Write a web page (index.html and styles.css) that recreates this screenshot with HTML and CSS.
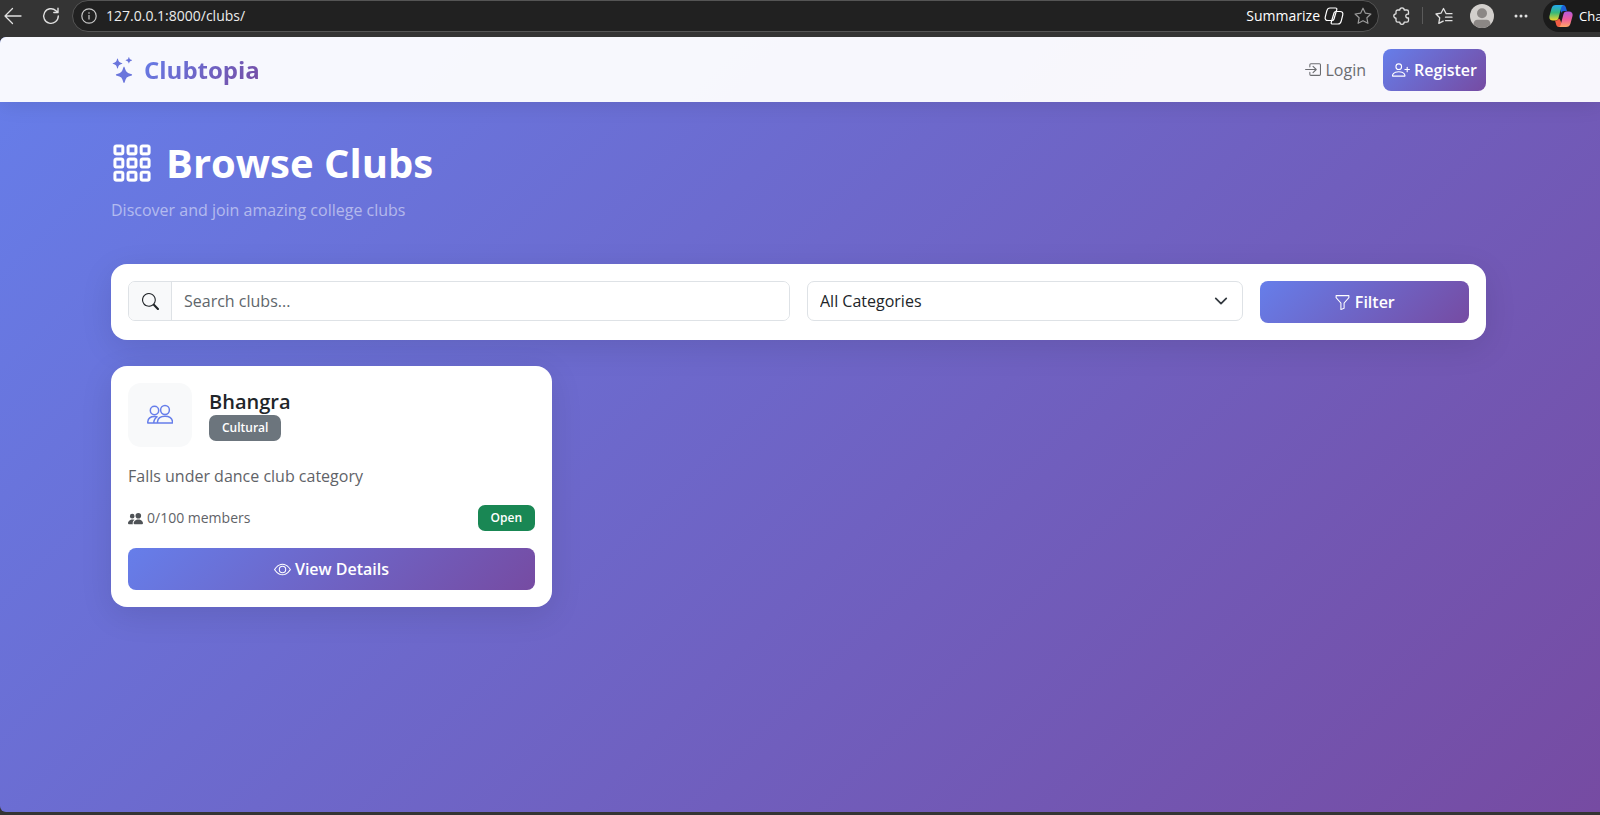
FILE: index.html
```html
<!DOCTYPE html>
<html lang="en">
<head>
    <meta charset="UTF-8">
    <meta name="viewport" content="width=device-width, initial-scale=1.0">
    <title>Browse Clubs - Clubtopia</title>
    <link rel="stylesheet" href="styles.css">
</head>
<body>
    <!-- Browser toolbar -->
    <div class="toolbar">
        <button class="tool back" aria-label="Back">
            <svg width="18" height="18" viewBox="0 0 18 18" fill="none" stroke="currentColor" stroke-width="1.3" stroke-linecap="round" stroke-linejoin="round"><path d="M17 9H1M8.500 1.500 1 9l7.500 7.500"/></svg>
        </button>
        <button class="tool reload" aria-label="Reload">
            <svg width="18" height="18" viewBox="0 0 18 18" fill="none" stroke="currentColor" stroke-width="1.400" stroke-linecap="round" stroke-linejoin="round"><path d="M16.300 9a7.300 7.300 0 1 1-2.300-5.300L16 5.500M16 1.300v4.200h-4.200"/></svg>
        </button>
        <div class="address">
            <svg width="16" height="16" viewBox="0 0 16 16" fill="none" stroke="#c8c8c8" stroke-width="1.200"><circle cx="8" cy="8" r="7.200"/><path d="M8 7v4.500M8 4.300v1.400"/></svg>
            <input class="address-input" type="text" aria-label="Address" value="127.0.0.1:8000/clubs/">
            <button class="summarize">Summarize
                <svg width="20" height="18" viewBox="0 0 20 18" fill="none" stroke="currentColor" stroke-width="1.200" stroke-linejoin="round"><path d="M6 1h5.500c1 0 1.500.5 1.300 1.500L10 12c-.3 1-.9 1.500-2 1.500H4c-2.300 0-3.300-1.400-2.700-3.600l1.500-6C3.300 1.900 4.300 1 6 1z"/><path d="M14 17H8.500c-1 0-1.500-.5-1.300-1.500L10 6c.3-1 .9-1.500 2-1.500h4c2.300 0 3.300 1.400 2.700 3.600l-1.500 6c-.5 2-1.500 2.900-3.200 2.900z"/></svg>
            </button>
            <button class="tool star" aria-label="Add to favorites">
                <svg width="18" height="18" viewBox="0 0 18 18" fill="none" stroke="currentColor" stroke-width="1.200" stroke-linejoin="round"><path d="m9 1.200 2.400 5 5.500.8-4 3.800 1 5.500L9 13.700l-4.900 2.600 1-5.500-4-3.800 5.500-.8z"/></svg>
            </button>
        </div>
        <button class="tool" aria-label="Extensions">
            <svg width="18" height="18" viewBox="0 0 18 18" fill="none" stroke="currentColor" stroke-width="1.300" stroke-linejoin="round"><path d="M4.700 3h2.100a2.200 2.200 0 0 1 4.400 0h2.600A1.700 1.700 0 0 1 15.500 4.700v2.500h-.8a1.900 1.900 0 0 0 0 3.800h.8v2.400a1.700 1.700 0 0 1-1.700 1.700h-2.600a2.200 2.200 0 0 1-4.400 0H4.700A1.700 1.700 0 0 1 3 13.400v-2.200a2.200 2.200 0 0 1 0-4.400V4.700A1.700 1.700 0 0 1 4.700 3z"/></svg>
        </button>
        <span class="divider"></span>
        <button class="tool" aria-label="Favorites">
            <svg width="18" height="18" viewBox="0 0 18 18" fill="none" stroke="currentColor" stroke-width="1.300" stroke-linejoin="round" stroke-linecap="round"><path d="M17 6.700h-5.800L8.500 1.500 6 6.200l-5 .8 3.700 3.800-.9 5.500 4.400-2.200M10.500 10.200H17M10.500 13.700H17"/></svg>
        </button>
        <button class="tool avatar" aria-label="Profile">
            <svg width="24" height="24" viewBox="0 0 24 24"><circle cx="12" cy="12" r="12" fill="#d2cfcc"/><circle cx="12" cy="9.300" r="5" fill="#8b8785"/><path d="M3.500 20.500c0-3 1.500-4.700 4-4.700h9c2.500 0 4 1.700 4 4.700a12 12 0 0 1-17 0z" fill="#8b8785"/></svg>
        </button>
        <button class="tool more" aria-label="Settings and more">
            <svg width="14" height="4" viewBox="0 0 14 4" fill="currentColor"><circle cx="2" cy="2" r="1.500"/><circle cx="7" cy="2" r="1.500"/><circle cx="12" cy="2" r="1.500"/></svg>
        </button>
        <button class="copilot">
            <svg width="24" height="24" viewBox="0 0 24 24">
                <defs>
                    <linearGradient id="cool" x1="0" y1="0" x2="0" y2="1"><stop offset="0" stop-color="#22a8f0"/><stop offset=".5" stop-color="#38b978"/><stop offset="1" stop-color="#f3d62b"/></linearGradient>
                    <linearGradient id="warm" x1="0" y1="0" x2="0" y2="1"><stop offset="0" stop-color="#b45ae0"/><stop offset=".5" stop-color="#ef5c9c"/><stop offset="1" stop-color="#ffa765"/></linearGradient>
                </defs>
                <path fill="#1b62d8" d="M10 1h4c1.500 0 2.300.7 2.700 2l1.300 4h-3c-1.500 0-2.300.8-2.700 2z"/>
                <path fill="url(#cool)" d="M7 1h8c-1.500 0-2.300 1-2.700 2.300L9.500 14c-.5 1.700-1.500 2.500-3 2.500H4c-3 0-4.200-2-3.400-5l1.900-7C3.200 2 4.500 1 7 1z"/>
                <path fill="#f25c43" d="M14 23h-4c-1.500 0-2.300-.7-2.700-2L6 16.500h1.500c1 0 1.800-.8 2.200-2l1.300 1z"/>
                <path fill="url(#warm)" d="M17 23H9c1.500 0 2.300-1 2.700-2.300L14.500 10c.5-1.700 1.500-2.500 3-2.500H20c3 0 4.200 2 3.400 5l-1.900 7c-.7 2.500-2 3.500-4.500 3.500z"/>
            </svg>
            Cha
        </button>
    </div>

    <div class="page">
        <nav class="navbar">
            <div class="container nav-inner">
                <a class="brand" href="#">
                    <svg class="brand-icon" width="26" height="26" viewBox="0 0 16 16" fill="#6a75dc"><path d="M7.657 6.247c.11-.33.576-.33.686 0l.645 1.937a2.890 2.890 0 0 0 1.829 1.828l1.936.645c.33.11.33.576 0 .686l-1.937.645a2.890 2.890 0 0 0-1.828 1.829l-.645 1.936a.361.361 0 0 1-.686 0l-.645-1.937a2.890 2.890 0 0 0-1.828-1.828l-1.937-.645a.361.361 0 0 1 0-.686l1.937-.645a2.890 2.890 0 0 0 1.828-1.828zM3.794 1.148a.217.217 0 0 1 .412 0l.387 1.162c.173.518.579.924 1.097 1.097l1.162.387a.217.217 0 0 1 0 .412l-1.162.387A1.730 1.730 0 0 0 4.593 5.690l-.387 1.162a.217.217 0 0 1-.412 0L3.407 5.690A1.730 1.730 0 0 0 2.310 4.593l-1.162-.387a.217.217 0 0 1 0-.412l1.162-.387A1.730 1.730 0 0 0 3.407 2.310zM10.863.099a.145.145 0 0 1 .274 0l.258.774c.115.346.386.617.732.732l.774.258a.145.145 0 0 1 0 .274l-.774.258a1.160 1.160 0 0 0-.732.732l-.258.774a.145.145 0 0 1-.274 0l-.258-.774a1.160 1.160 0 0 0-.732-.732L9.100 2.137a.145.145 0 0 1 0-.274l.774-.258c.346-.115.617-.386.732-.732z"/></svg>
                    <span class="brand-name">Clubtopia</span>
                </a>
                <div class="nav-links">
                    <a class="nav-link" href="#">
                        <svg width="17" height="17" viewBox="0 0 16 16" fill="currentColor"><path fill-rule="evenodd" d="M6 3.500a.5.5 0 0 1 .5-.5h8a.5.5 0 0 1 .5.5v9a.5.5 0 0 1-.5.5h-8a.5.5 0 0 1-.5-.5v-2a.5.5 0 0 0-1 0v2A1.500 1.500 0 0 0 6.500 14h8a1.500 1.500 0 0 0 1.500-1.500v-9A1.500 1.500 0 0 0 14.500 2h-8A1.500 1.500 0 0 0 5 3.500v2a.5.5 0 0 0 1 0z"/><path fill-rule="evenodd" d="M11.854 8.354a.5.5 0 0 0 0-.708l-3-3a.5.5 0 1 0-.708.708L10.293 7.500H1.500a.5.5 0 0 0 0 1h8.793l-2.147 2.146a.5.5 0 0 0 .708.708z"/></svg>
                        Login
                    </a>
                    <a class="btn" href="#">
                        <svg width="18" height="18" viewBox="0 0 16 16" fill="currentColor"><path d="M6 8a3 3 0 1 0 0-6 3 3 0 0 0 0 6m2-3a2 2 0 1 1-4 0 2 2 0 0 1 4 0m4 8c0 1-1 1-1 1H1s-1 0-1-1 1-4 6-4 6 3 6 4m-1-.004c-.001-.246-.154-.986-.832-1.664C9.516 10.680 8.289 10 6 10s-3.516.68-4.168 1.332c-.678.678-.83 1.418-.832 1.664z"/><path fill-rule="evenodd" d="M13.500 5a.5.5 0 0 1 .5.5V7h1.500a.5.5 0 0 1 0 1H14v1.500a.5.5 0 0 1-1 0V8h-1.500a.5.5 0 0 1 0-1H13V5.500a.5.5 0 0 1 .5-.5"/></svg>
                        Register
                    </a>
                </div>
            </div>
        </nav>

        <main class="container">
            <header class="page-header">
                <h1>
                    <svg width="42" height="42" viewBox="0 0 16 16" fill="currentColor" stroke="currentColor" stroke-width=".15"><path d="M4 2v2H2V2zm1 12v-2a1 1 0 0 0-1-1H2a1 1 0 0 0-1 1v2a1 1 0 0 0 1 1h2a1 1 0 0 0 1-1m0-5V7a1 1 0 0 0-1-1H2a1 1 0 0 0-1 1v2a1 1 0 0 0 1 1h2a1 1 0 0 0 1-1m0-5V2a1 1 0 0 0-1-1H2a1 1 0 0 0-1 1v2a1 1 0 0 0 1 1h2a1 1 0 0 0 1-1m5 10v-2a1 1 0 0 0-1-1H7a1 1 0 0 0-1 1v2a1 1 0 0 0 1 1h2a1 1 0 0 0 1-1m0-5V7a1 1 0 0 0-1-1H7a1 1 0 0 0-1 1v2a1 1 0 0 0 1 1h2a1 1 0 0 0 1-1m0-5V2a1 1 0 0 0-1-1H7a1 1 0 0 0-1 1v2a1 1 0 0 0 1 1h2a1 1 0 0 0 1-1M9 2v2H7V2zm5 0v2h-2V2zM4 7v2H2V7zm5 0v2H7V7zm5 0h-2v2h2zM4 12v2H2v-2zm5 0v2H7v-2zm5 0v2h-2v-2zM12 1a1 1 0 0 0-1 1v2a1 1 0 0 0 1 1h2a1 1 0 0 0 1-1V2a1 1 0 0 0-1-1zm-1 6a1 1 0 0 1 1-1h2a1 1 0 0 1 1 1v2a1 1 0 0 1-1 1h-2a1 1 0 0 1-1-1zm1 4a1 1 0 0 0-1 1v2a1 1 0 0 0 1 1h2a1 1 0 0 0 1-1v-2a1 1 0 0 0-1-1z"/></svg>
                    Browse Clubs
                </h1>
                <p class="subtitle">Discover and join amazing college clubs</p>
            </header>

            <form class="card filter-form">
                <div class="search-group">
                    <label class="search-icon" for="search" aria-label="Search">
                        <svg width="17" height="17" viewBox="0 0 16 16" fill="currentColor"><path d="M11.742 10.344a6.500 6.500 0 1 0-1.397 1.398h-.001q.044.06.098.115l3.850 3.850a1 1 0 0 0 1.415-1.414l-3.850-3.850a1 1 0 0 0-.115-.1zM12 6.500a5.500 5.500 0 1 1-11 0 5.500 5.500 0 0 1 11 0"/></svg>
                    </label>
                    <input class="search-input" id="search" type="text" placeholder="Search clubs...">
                </div>
                <select class="category-select" aria-label="Category">
                    <option>All Categories</option>
                    <option>Cultural</option>
                </select>
                <button class="btn btn-filter" type="button">
                    <svg width="17" height="17" viewBox="0 0 16 16" fill="currentColor"><path d="M1.500 1.500A.5.5 0 0 1 2 1h12a.5.5 0 0 1 .5.5v2a.5.5 0 0 1-.128.334L10 8.692V13.500a.5.5 0 0 1-.342.474l-3 1A.5.5 0 0 1 6 14.500V8.692L1.628 3.834A.5.5 0 0 1 1.500 3.500zm1 .5v1.308l4.372 4.858A.5.5 0 0 1 7 8.500v5.306l2-.666V8.500a.5.5 0 0 1 .128-.334L13.500 3.308V2z"/></svg>
                    Filter
                </button>
            </form>

            <section class="club-grid">
                <article class="card club-card">
                    <div class="club-head">
                        <div class="club-icon">
                            <svg width="26" height="26" viewBox="0 0 26 26" fill="none" stroke="currentColor" stroke-width="1.500" stroke-linejoin="round"><circle cx="7.500" cy="8.500" r="4.200"/><circle cx="18" cy="8" r="4.400"/><path d="M10.500 21v-1.200c.3-3.600 3.300-5.600 7.500-5.600s7.200 2 7.500 5.600V21zM10.500 21H.8v-1.200c.3-3.600 2.500-5.300 6.700-5.300.9 0 1.700.1 2.500.3-2.300 1.300-3.100 3-3.300 6.200"/></svg>
                        </div>
                        <div>
                            <h2>Bhangra</h2>
                            <span class="badge">Cultural</span>
                        </div>
                    </div>
                    <p class="club-text">Falls under dance club category</p>
                    <div class="club-meta">
                        <span class="members">
                            <svg width="15" height="15" viewBox="0 0 16 16" fill="currentColor"><path d="M7 14s-1 0-1-1 1-4 5-4 5 3 5 4-1 1-1 1zm4-6a3 3 0 1 0 0-6 3 3 0 0 0 0 6m-5.784 6A2.240 2.240 0 0 1 5 13c0-1.355.68-2.750 1.936-3.720A6.300 6.300 0 0 0 5 9c-4 0-5 3-5 4s1 1 1 1zM4.500 8a2.500 2.500 0 1 0 0-5 2.500 2.500 0 0 0 0 5"/></svg>
                            0/100 members
                        </span>
                        <span class="badge badge-open">Open</span>
                    </div>
                    <a class="btn" href="#">
                        <svg width="17" height="17" viewBox="0 0 16 16" fill="currentColor"><path d="M16 8s-3-5.500-8-5.500S0 8 0 8s3 5.500 8 5.500S16 8 16 8M1.173 8a13 13 0 0 1 1.660-2.043C4.120 4.668 5.880 3.500 8 3.500s3.879 1.168 5.168 2.457A13 13 0 0 1 14.828 8q-.086.13-.195.288c-.335.48-.83 1.120-1.465 1.755C11.879 11.332 10.119 12.500 8 12.500s-3.879-1.168-5.168-2.457A13 13 0 0 1 1.172 8z"/><path d="M8 5.500a2.500 2.500 0 1 0 0 5 2.500 2.500 0 0 0 0-5M4.500 8a3.500 3.500 0 1 1 7 0 3.500 3.500 0 0 1-7 0"/></svg>
                        View Details
                    </a>
                </article>
            </section>
        </main>
    </div>
</body>
</html>
```
FILE: styles.css
```css
* { box-sizing: border-box; }
body { margin: 0; min-height: 100vh; display: flex; flex-direction: column; overflow-x: hidden; padding-bottom: 3px; background-color: #343434; color: #212529; font-family: "Open Sans", "Noto Sans", sans-serif; font-size: 16px; line-height: 26px; }
svg { flex-shrink: 0; }
a { text-decoration: none; }
button, input, select { font-family: inherit; }
h1, h2, p { margin: 0; }

/* Browser toolbar */
.toolbar { display: flex; align-items: center; height: 37px; padding: 0 0 6px 4px; overflow: hidden; color: #e0e0e0; font-size: 14px; }
.toolbar button { display: flex; align-items: center; padding: 0; border: 0; background: none; color: inherit; font-size: 14px; flex-shrink: 0; }
.toolbar .reload { margin: 0 12px 0 20px; }
.address { flex: 1; min-width: 0; display: flex; align-items: center; height: 32px; padding: 0 6px 0 8px; background-color: #212121; border: 1px solid #555; border-radius: 16px; }
.address-input { flex: 1; min-width: 0; margin-left: 9px; padding: 0; border: 0; outline: 0; background: none; color: #ececec; font-size: 14px; }
.toolbar .summarize { gap: 4px; color: #fff; }
.toolbar .star { margin-left: 10px; color: #9a9a9a; }
.address + .tool { margin-left: 14px; }
.divider { width: 1px; height: 17px; margin: 0 12px 0 11px; background-color: #5a5a5a; }
.toolbar .avatar { margin-left: 17px; }
.toolbar .more { margin: 0 15px 0 20px; }
.toolbar .copilot { gap: 6px; height: 32px; width: 57px; padding-left: 6px; background-color: #1b1b1b; border-radius: 16px 0 0 16px; color: #fff; font-size: 13px; }

/* Page */
.page { flex: 1; border-radius: 6px 0 0 6px; overflow: hidden; background: linear-gradient(135deg, #667eea 0%, #764ba2 100%); }
.container { padding: 0 114px 0 111px; }
.navbar { background-color: rgba(255, 255, 255, 0.95); box-shadow: 0 2px 20px rgba(0, 0, 0, 0.1); }
.nav-inner { display: flex; align-items: center; justify-content: space-between; height: 65px; }
.brand { display: flex; align-items: center; gap: 7px; }
.brand-name { background: linear-gradient(135deg, #667eea, #764ba2); -webkit-background-clip: text; background-clip: text; color: transparent; font-size: 24px; font-weight: 700; line-height: 34px; }
.nav-links { display: flex; align-items: center; gap: 17px; }
.nav-link { display: flex; align-items: center; gap: 4px; color: #6b6c70; }

.btn { display: flex; align-items: center; justify-content: center; gap: 4px; height: 42px; padding: 0 9px; border: 0; border-radius: 8px; background: linear-gradient(135deg, #667eea 0%, #764ba2 100%); color: #fff; font-size: 16px; font-weight: 600; }

.page-header { padding: 35px 0 41px; color: #fff; }
.page-header h1 { display: flex; align-items: center; gap: 13px; font-size: 40px; font-weight: 700; line-height: 52px; }
.subtitle { margin-top: 8px; color: rgba(255, 255, 255, 0.5); }

.card { padding: 17px; background-color: #fff; border-radius: 16px; box-shadow: 0 8px 32px rgba(0, 0, 0, 0.1); }
.filter-form { display: grid; grid-template-columns: repeat(12, 1fr); gap: 17px; align-items: start; }
.search-group { grid-column: span 6; display: flex; height: 40px; border: 1px solid #dee2e6; border-radius: 7px; overflow: hidden; }
.search-icon { display: flex; align-items: center; justify-content: center; width: 43px; background-color: #f8f9fa; border-right: 1px solid #dee2e6; }
.search-input { flex: 1; min-width: 0; padding: 0 12px; border: 0; outline: 0; font-size: 16px; }
.search-input::placeholder { color: #60666b; }
.category-select { grid-column: span 4; height: 40px; padding: 0 12px; appearance: none; border: 1px solid #dee2e6; border-radius: 7px; color: #212529; font-size: 16px; background: #fff url("data:image/svg+xml,%3csvg xmlns='http://www.w3.org/2000/svg' viewBox='0 0 16 16'%3e%3cpath fill='none' stroke='%23343a40' stroke-linecap='round' stroke-linejoin='round' stroke-width='2' d='m2 5 6 6 6-6'/%3e%3c/svg%3e") no-repeat right 14px center / 14px 14px; }
.btn-filter { grid-column: span 2; }

.club-grid { display: grid; grid-template-columns: repeat(3, 1fr); gap: 26px; padding: 26px 0; }
.club-head { display: flex; align-items: center; gap: 17px; }
.club-icon { display: flex; align-items: center; justify-content: center; width: 64px; height: 64px; background-color: #f8f9fa; border-radius: 13px; color: #667eea; }
.club-head h2 { font-size: 20px; font-weight: 600; line-height: 26px; }
.badge { display: block; width: fit-content; padding: 0 13px; background-color: #6c757d; border-radius: 7px; color: #fff; font-size: 12px; font-weight: 600; line-height: 26px; }
.badge-open { background-color: #198754; }
.club-text { margin: 16px 0; color: #5f6368; }
.club-meta { display: flex; align-items: center; justify-content: space-between; margin-bottom: 17px; }
.members { display: flex; align-items: center; gap: 4px; color: #5f6368; font-size: 14px; }
.members svg { color: #4f5357; }
```
